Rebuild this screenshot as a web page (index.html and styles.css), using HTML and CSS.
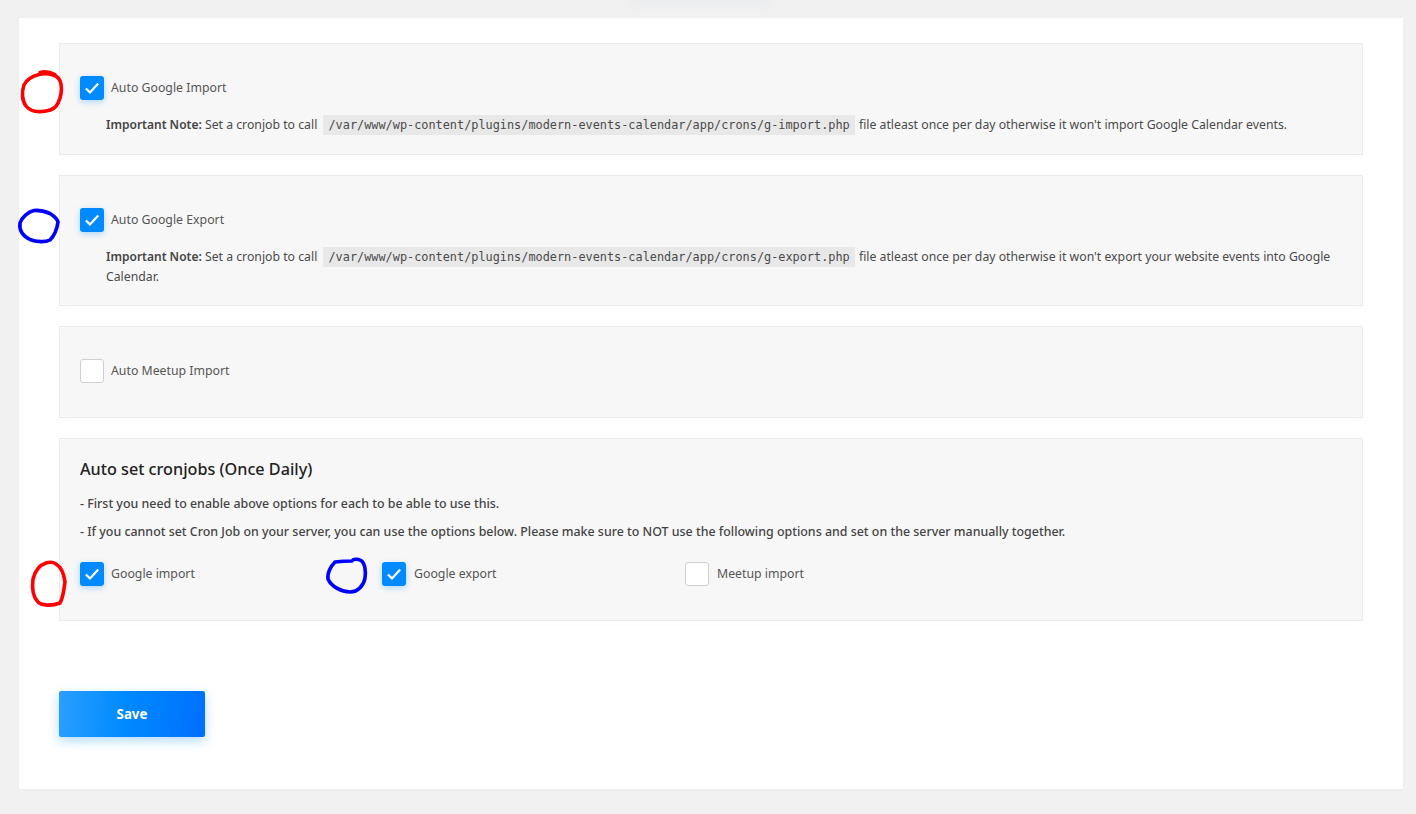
FILE: index.html
```html
<!DOCTYPE html>
<html lang="en">
<head>
<meta charset="utf-8">
<title>Settings</title>
<link rel="stylesheet" href="styles.css">
</head>
<body>
<div class="glow"></div>
<main class="card">
  <section class="panel p1">
    <label class="check"><span class="box on"><svg viewBox="0 0 24 24" class="tick"><path d="M5.800 12.500l4.200 3.900 8.200-8.800"/></svg></span>Auto Google Import</label>
    <p class="note"><strong>Important Note:</strong> Set a cronjob to call <code>/var/www/wp-content/plugins/modern-events-calendar/app/crons/g-import.php</code> file atleast once per day otherwise it won't import Google Calendar events.</p>
  </section>
  <section class="panel p2">
    <label class="check"><span class="box on"><svg viewBox="0 0 24 24" class="tick"><path d="M5.800 12.500l4.200 3.900 8.200-8.800"/></svg></span>Auto Google Export</label>
    <p class="note"><strong>Important Note:</strong> Set a cronjob to call <code>/var/www/wp-content/plugins/modern-events-calendar/app/crons/g-export.php</code> file atleast once per day otherwise it won't export your website events into Google Calendar.</p>
  </section>
  <section class="panel p3">
    <label class="check"><span class="box"></span>Auto Meetup Import</label>
  </section>
  <section class="panel p4">
    <h4 class="title">Auto set cronjobs (Once Daily)</h4>
    <p class="line">- First you need to enable above options for each to be able to use this.</p>
    <p class="line">- If you cannot set Cron Job on your server, you can use the options below. Please make sure to NOT use the following options and set on the server manually together.</p>
    <div class="opts">
      <label class="check opt"><span class="box on"><svg viewBox="0 0 24 24" class="tick"><path d="M5.800 12.500l4.200 3.900 8.200-8.800"/></svg></span>Google import</label>
      <label class="check opt"><span class="box on"><svg viewBox="0 0 24 24" class="tick"><path d="M5.800 12.500l4.200 3.900 8.200-8.800"/></svg></span>Google export</label>
      <label class="check opt"><span class="box"></span>Meetup import</label>
    </div>
  </section>
  <button class="save" type="button">Save</button>
</main>
<svg class="ink" width="1416" height="814" viewBox="0 0 1416 814" fill="none" stroke-linecap="round" stroke-linejoin="round" stroke-width="3.600">
  <path stroke="#ff0000" d="M40 72.500C44 71.500 50 72 55 74.500M39 74.500C33 76 27 79 24 85C21.500 92 22 101 26 106C30 111 38 112.500 46 111C52 110 56 108 58 103C61 97 62 90 61 84C60 79 57 76 53 75C48 73.500 43 73.500 39 74.500Z"/>
  <path stroke="#0000ff" d="M34 210.500C28 212 22 217 20 223C19 230 23 236 30 239.500C36 242 45 242.500 50 240C54 236 57 229 58 222C57 218 53 215.500 50 213.500C44 211 39 210 34 210.500Z"/>
  <path stroke="#ff0000" d="M46 563C40 565 35 571 33 579C32 587 33 597 38 602C42 606 52 606 60 603C63 598 64 590 65 582C64 574 61 567 56 564C53 562 49 562 46 563Z"/>
  <path stroke="#0000ff" d="M335 562C331 566 327 573 328 579C331 586 341 592 350 592C358 592 364 585 365 578C366 571 365 563 361 560.500C357 558.500 353 559 352 561C344 561 339 561.500 335 562Z"/>
</svg>
</body>
</html>
```
FILE: styles.css
```css
* { box-sizing: border-box; }
html, body { margin: 0; padding: 0; }
body {
  background: #f1f1f1;
  font-family: "Noto Sans", "Open Sans", sans-serif;
  color: #444;
  height: 814px;
  padding: 18px 13px 0 19px;
  overflow: hidden;
}
.glow {
  position: absolute;
  left: 630px;
  top: -6px;
  width: 140px;
  height: 10px;
  background: #e9ebee;
  filter: blur(4px);
}
.card {
  height: 771px;
  background: #fff;
  padding: 25px 40px 0;
  box-shadow: 0 1px 4px rgba(0, 0, 0, 0.03);
}
.panel {
  background: #f7f7f7;
  border: 1px solid #ebebeb;
  padding: 0 20px;
  margin-bottom: 20px;
  box-shadow: 0 2px 10px rgba(0, 0, 0, 0.015);
}
.p1 { height: 112px; padding-top: 32px; }
.p2 { height: 131px; padding-top: 32px; }
.p3 { height: 92px; padding-top: 32px; }
.p4 { height: 183px; padding-top: 18px; margin-bottom: 70px; }
.check {
  display: flex;
  align-items: center;
  gap: 7px;
  font-size: 12.300px;
  line-height: 24px;
  height: 24px;
  color: #555;
}
.opt + .opt { gap: 8px; }
.box {
  width: 24px;
  height: 24px;
  border-radius: 3px;
  background: #fff;
  border: 1px solid #cfcfcf;
  display: block;
  flex: none;
}
.box.on {
  background: #008aff;
  border: 0;
  box-shadow: 0 2px 6px rgba(0, 138, 255, 0.3);
}
.tick {
  display: block;
  width: 24px;
  height: 24px;
  fill: none;
  stroke: #fff;
  stroke-width: 2.200;
}
.note {
  margin: 15px 0 0 26px;
  font-size: 12.260px;
  line-height: 20px;
  color: #4a4a4a;
}
.note strong { font-size: 12px; font-weight: 600; color: #444; }
.note code {
  font-family: "DejaVu Sans Mono", monospace;
  font-size: 11.870px;
  background: #e8e8e8;
  padding: 3px 5px;
  margin: 0 1px 0 3px;
  color: #4a4a4a;
}
.title {
  margin: 0 0 9px;
  font-size: 16.200px;
  line-height: 24px;
  font-weight: 500;
  color: #222;
}
.line {
  margin: 0;
  font-size: 12.420px;
  line-height: 28px;
  font-weight: 500;
  color: #444;
}
.opts {
  display: grid;
  grid-template-columns: 302px 303px 1fr;
  margin-top: 16px;
}
.save {
  display: block;
  width: 146px;
  height: 46px;
  border: 0;
  border-radius: 2px;
  background: linear-gradient(95deg, #2a9fff 0%, #008aff 45%, #006fff 100%);
  box-shadow: 0 4px 12px rgba(0, 138, 255, 0.3);
  color: #fff;
  font-family: "Noto Sans", sans-serif;
  font-size: 13.300px;
  font-weight: 700;
}
.ink { position: absolute; left: 0; top: 0; pointer-events: none; }
```
